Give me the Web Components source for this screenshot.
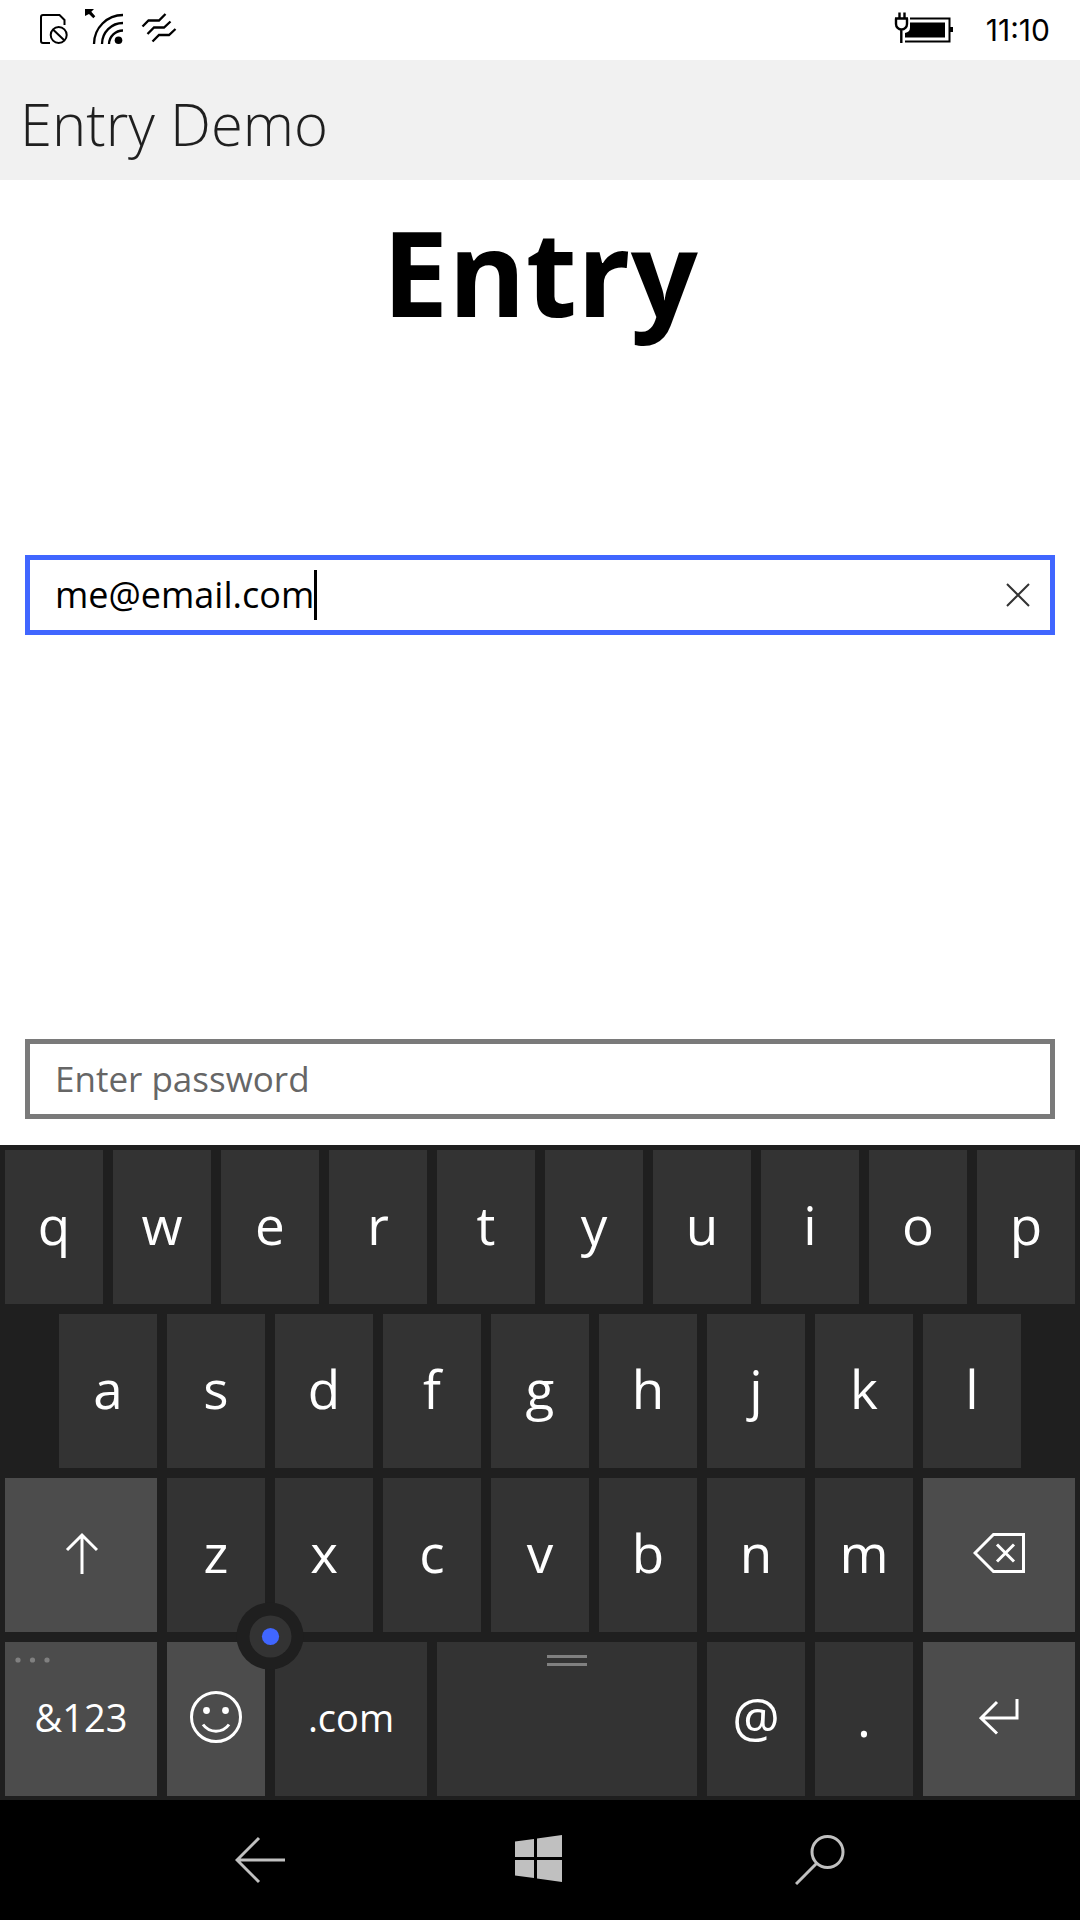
<!DOCTYPE html>
<html lang="en">
<head>
<meta charset="utf-8">
<meta name="viewport" content="width=device-width, initial-scale=1">
<title>Entry Demo</title>
<style>
  html, body { margin: 0; height: 100%; }
  body { background: #fff; font-family: "Open Sans", "Noto Sans", sans-serif; }
</style>
</head>
<body>
<phone-screen>
  <status-bar slot="status" time="11:10"></status-bar>
  <title-bar slot="title">Entry Demo</title-bar>
  <entry-page slot="page">
    <span slot="heading">Entry</span>
    <entry-field slot="email" type="email" label="Email" value="me@email.com" active></entry-field>
    <entry-field slot="password" type="password" label="Password" placeholder="Enter password"></entry-field>
  </entry-page>
  <soft-keyboard slot="keyboard"></soft-keyboard>
  <nav-bar slot="nav"></nav-bar>
</phone-screen>

<script>
const define = (name, html, setup) => {
  const template = document.createElement('template');
  template.innerHTML = html;
  customElements.define(name, class extends HTMLElement {
    connectedCallback() {
      if (this.shadowRoot) return;
      this.attachShadow({ mode: 'open' }).append(template.content.cloneNode(true));
      if (setup) setup(this, this.shadowRoot);
    }
  });
};

define('phone-screen', `
  <style>
    :host { display: flex; flex-direction: column; min-height: 100vh; }
    slot[name=page]::slotted(*) { flex: 1; }
  </style>
  <slot name="status"></slot>
  <slot name="title"></slot>
  <slot name="page"></slot>
  <slot name="keyboard"></slot>
  <slot name="nav"></slot>`);

define('status-bar', `
  <style>
    :host { display: flex; align-items: center; justify-content: space-between;
            height: 60px; padding: 0 30px 0 36px; background: #fff; color: #000; }
    .group { display: flex; align-items: center; }
    .right { gap: 32px; }
    svg { display: block; fill: none; stroke: #000; stroke-width: 2; }
    time { font-family: Inter, "Open Sans", sans-serif; font-size: 30px; font-weight: 400; line-height: 60px; }
  </style>
  <div class="group">
    <svg width="144" height="60" viewBox="36 0 144 60" role="img" aria-label="No SIM, Wi-Fi, vibrate">
      <path d="M50 43h-7a2 2 0 0 1-2-2V17a2 2 0 0 1 2-2h16.500l5 5V25"/>
      <circle cx="58.700" cy="35" r="8"/><path d="M53 29.500l11.500 11"/>
      <path d="M123 15A29 29 0 0 0 94 44M123 23A21 21 0 0 0 102 44M123 30.500A14 14 0 0 0 109 44" stroke-width="2.300"/>
      <circle cx="118.500" cy="40.300" r="3.800" fill="#000" stroke="none"/>
      <path d="M85 9h9l-2.700 2.700 4 4.500-2 2-4.300-4.300L85 16z" fill="#000" stroke="none"/>
      <path d="M142.500 26.500l6-6h10.500l6.500-6.500M147.500 34l6.500-6.500h10l6.500-6M152.500 41.500l6.500-6.500h10l6.500-6" stroke-width="2.300"/>
    </svg>
  </div>
  <div class="group right">
    <svg width="60" height="60" viewBox="894 0 60 60" role="img" aria-label="Battery charging">
      <path d="M910 18.500h39.500v23H905"/>
      <path d="M950 27h3v5h-3z" fill="#000" stroke="none"/>
      <path d="M910 22.500h35v15h-40v-4.500q5-1 5-5.500z" fill="#000" stroke="none"/>
      <path d="M899.500 12.500v6M904.500 12.500v6M895 18.500h13M896 18.500v5.500a5.300 5.300 0 0 0 11 0v-5.500M901.300 29v14" stroke-width="2.400"/>
    </svg>
    <time></time>
  </div>`,
  (el, root) => { root.querySelector('time').textContent = el.getAttribute('time'); });

define('title-bar', `
  <style>
    :host { display: flex; align-items: center; height: 120px; box-sizing: border-box;
            padding: 8px 20px 0; background: #f1f1f1; color: #1f1f1f; }
    h1 { margin: 0; font-size: 58px; font-weight: 340; line-height: 80px; }
  </style>
  <h1><slot></slot></h1>`);

define('entry-page', `
  <style>
    :host { display: grid; grid-template-rows: auto 1fr auto 2fr auto; padding: 10px 25px 26px; box-sizing: border-box; }
    h2 { grid-row: 1; margin: 0; text-align: center; font-size: 118px; font-weight: 700; line-height: 163px; }
    slot[name=email]::slotted(*) { grid-row: 3; }
    slot[name=password]::slotted(*) { grid-row: 5; }
  </style>
  <h2><slot name="heading"></slot></h2>
  <slot name="email"></slot>
  <slot name="password"></slot>`);

define('entry-field', `
  <style>
    :host { display: flex; align-items: center; height: 80px; box-sizing: border-box;
            padding: 0 13px 0 25px; border: 5px solid #7a7a7a; background: #fff; }
    :host([active]) { border-color: #4066ff; }
    input { flex: 1; min-width: 0; padding: 0; border: 0; outline: 0; background: none;
            font: inherit; font-size: 36px; line-height: 50px; color: #000; }
    :host([active]) input { flex: 0 1 auto; field-sizing: content; }
    input::placeholder { color: #666; opacity: 1; font-size: 35px; }
    .caret { width: 3px; height: 50px; background: #000; }
    button { margin-left: auto; width: 38px; height: 60px; padding: 0; border: 0; background: none; }
    svg { display: block; margin: auto; fill: none; stroke: #333; stroke-width: 2; }
    :host(:not([active])) .caret, :host(:not([active])) button { display: none; }
  </style>
  <input>
  <span class="caret"></span>
  <button type="button" aria-label="Clear">
    <svg width="24" height="24" viewBox="0 0 24 24"><path d="M1 1l22 22M23 1L1 23"/></svg>
  </button>`,
  (el, root) => {
    const input = root.querySelector('input');
    input.type = el.getAttribute('type');
    input.value = el.getAttribute('value') || '';
    input.placeholder = el.getAttribute('placeholder') || '';
    input.setAttribute('aria-label', el.getAttribute('label'));
    root.querySelector('button').addEventListener('click', () => { input.value = ''; input.focus(); });
  });

define('key-cap', `
  <style>
    :host { display: block; }
    button { position: relative; display: flex; align-items: center; justify-content: center; box-sizing: border-box;
             width: 100%; height: 154px; padding: 0 0 4px; border: 0; background: #333; color: #fff;
             font: inherit; font-size: 53px; line-height: 70px; }
    :host([dark]) button { background: #4c4c4c; }
    :host([small]) button { font-size: 38px; }
  </style>
  <button type="button"><slot></slot></button>`,
  (el, root) => {
    if (el.hasAttribute('label')) root.querySelector('button').setAttribute('aria-label', el.getAttribute('label'));
  });

define('soft-keyboard', `
  <style>
    :host { position: relative; display: grid; grid-template-columns: repeat(20, 1fr); gap: 10px;
            padding: 5px 5px 4px; background: #1f1f1f; }
    key-cap { grid-column: span 2; }
    .indent { grid-column: 2 / span 2; }
    .newline { grid-column: 1 / span 3; }
    .wide { grid-column: span 3; }
    .space { grid-column: span 5; }
    svg { display: block; fill: none; stroke: #fff; stroke-width: 3; }
    .mark { position: absolute; stroke: none; fill: #808080; }
    .dots { left: 10px; top: 14px; }
    .grip { left: calc(50% - 20px); top: 12px; }
    .pointer { position: absolute; left: 25%; bottom: 164px; width: 67px; height: 67px; padding: 0; border: 0;
               border-radius: 50%; background: #1f1f1f; transform: translate(-50%, 50%); }
    .pointer svg { margin: auto; }
  </style>
  <key-cap>q</key-cap><key-cap>w</key-cap><key-cap>e</key-cap><key-cap>r</key-cap><key-cap>t</key-cap>
  <key-cap>y</key-cap><key-cap>u</key-cap><key-cap>i</key-cap><key-cap>o</key-cap><key-cap>p</key-cap>

  <key-cap class="indent">a</key-cap><key-cap>s</key-cap><key-cap>d</key-cap><key-cap>f</key-cap><key-cap>g</key-cap>
  <key-cap>h</key-cap><key-cap>j</key-cap><key-cap>k</key-cap><key-cap>l</key-cap>

  <key-cap class="newline" dark label="Shift">
    <svg width="34" height="42" viewBox="0 0 34 42"><path d="M18 42V3M3 18L18 3l15 15"/></svg>
  </key-cap>
  <key-cap>z</key-cap><key-cap>x</key-cap><key-cap>c</key-cap><key-cap>v</key-cap><key-cap>b</key-cap><key-cap>n</key-cap><key-cap>m</key-cap>
  <key-cap class="wide" dark label="Backspace">
    <svg width="52" height="42" viewBox="0 0 52 42"><path d="M2 21L20.500 2.500H50.500V39.500H20.500zM24 12.500l17 17M41 12.500l-17 17"/></svg>
  </key-cap>

  <key-cap class="newline" dark small>&amp;123<svg class="mark dots" width="42" height="10" viewBox="0 0 42 10"><circle cx="3" cy="4" r="2.600"/><circle cx="17.500" cy="4" r="2.600"/><circle cx="32" cy="4" r="2.600"/></svg></key-cap>
  <key-cap dark label="Emoji">
    <svg width="52" height="52" viewBox="0 0 52 52"><circle cx="26" cy="26" r="24.500"/><path d="M13 33.500a16 16 0 0 0 26 0"/><circle cx="16.500" cy="19.500" r="3.400" fill="#fff" stroke="none"/><circle cx="35.500" cy="19.500" r="3.400" fill="#fff" stroke="none"/></svg>
  </key-cap>
  <key-cap class="wide" small>.com</key-cap>
  <key-cap class="space" label="Space">
    <svg class="mark grip" width="40" height="14" viewBox="0 0 40 14"><path d="M0 1h40v3H0zM0 9h40v3H0z"/></svg>
  </key-cap>
  <key-cap>@</key-cap><key-cap>.</key-cap>
  <key-cap class="wide" dark label="Enter">
    <svg width="40" height="36" viewBox="0 0 40 36"><path d="M38 0v19H2M18 3L2 19l16 15.500"/></svg>
  </key-cap>
  <button class="pointer" type="button" aria-label="Move cursor">
    <svg width="66" height="66" viewBox="0 0 66 66" stroke="none"><circle cx="33" cy="33" r="21" fill="#333" stroke="none"/><circle cx="33" cy="33" r="8.600" fill="#4066ff" stroke="none"/></svg>
  </button>`);

define('nav-bar', `
  <style>
    :host { display: grid; grid-template-columns: repeat(3, 1fr); height: 120px; padding: 0 120px; background: #000; }
    button { display: flex; align-items: center; justify-content: center; padding: 0; border: 0; background: none; }
    svg { display: block; fill: none; stroke: #c0c0c0; stroke-width: 3; }
  </style>
  <button type="button" aria-label="Back">
    <svg width="50" height="50" viewBox="0 0 50 50"><path d="M50 25H2M24 3L2 25l22 22"/></svg>
  </button>
  <button type="button" aria-label="Start">
    <svg width="50" height="50" viewBox="0 0 50 50"><path fill="#c0c0c0" stroke="none" d="M0 6.500L19 4v18H0zM22 3.500L47 0v22H22zM0 25h19v18L0 40.500zM22 25h25v22L22 43.500z"/></svg>
  </button>
  <button type="button" aria-label="Search">
    <svg width="50" height="50" viewBox="0 0 50 50"><circle cx="32.500" cy="17" r="15.500"/><path d="M21.500 28.500L1 49"/></svg>
  </button>`);
</script>
</body>
</html>
